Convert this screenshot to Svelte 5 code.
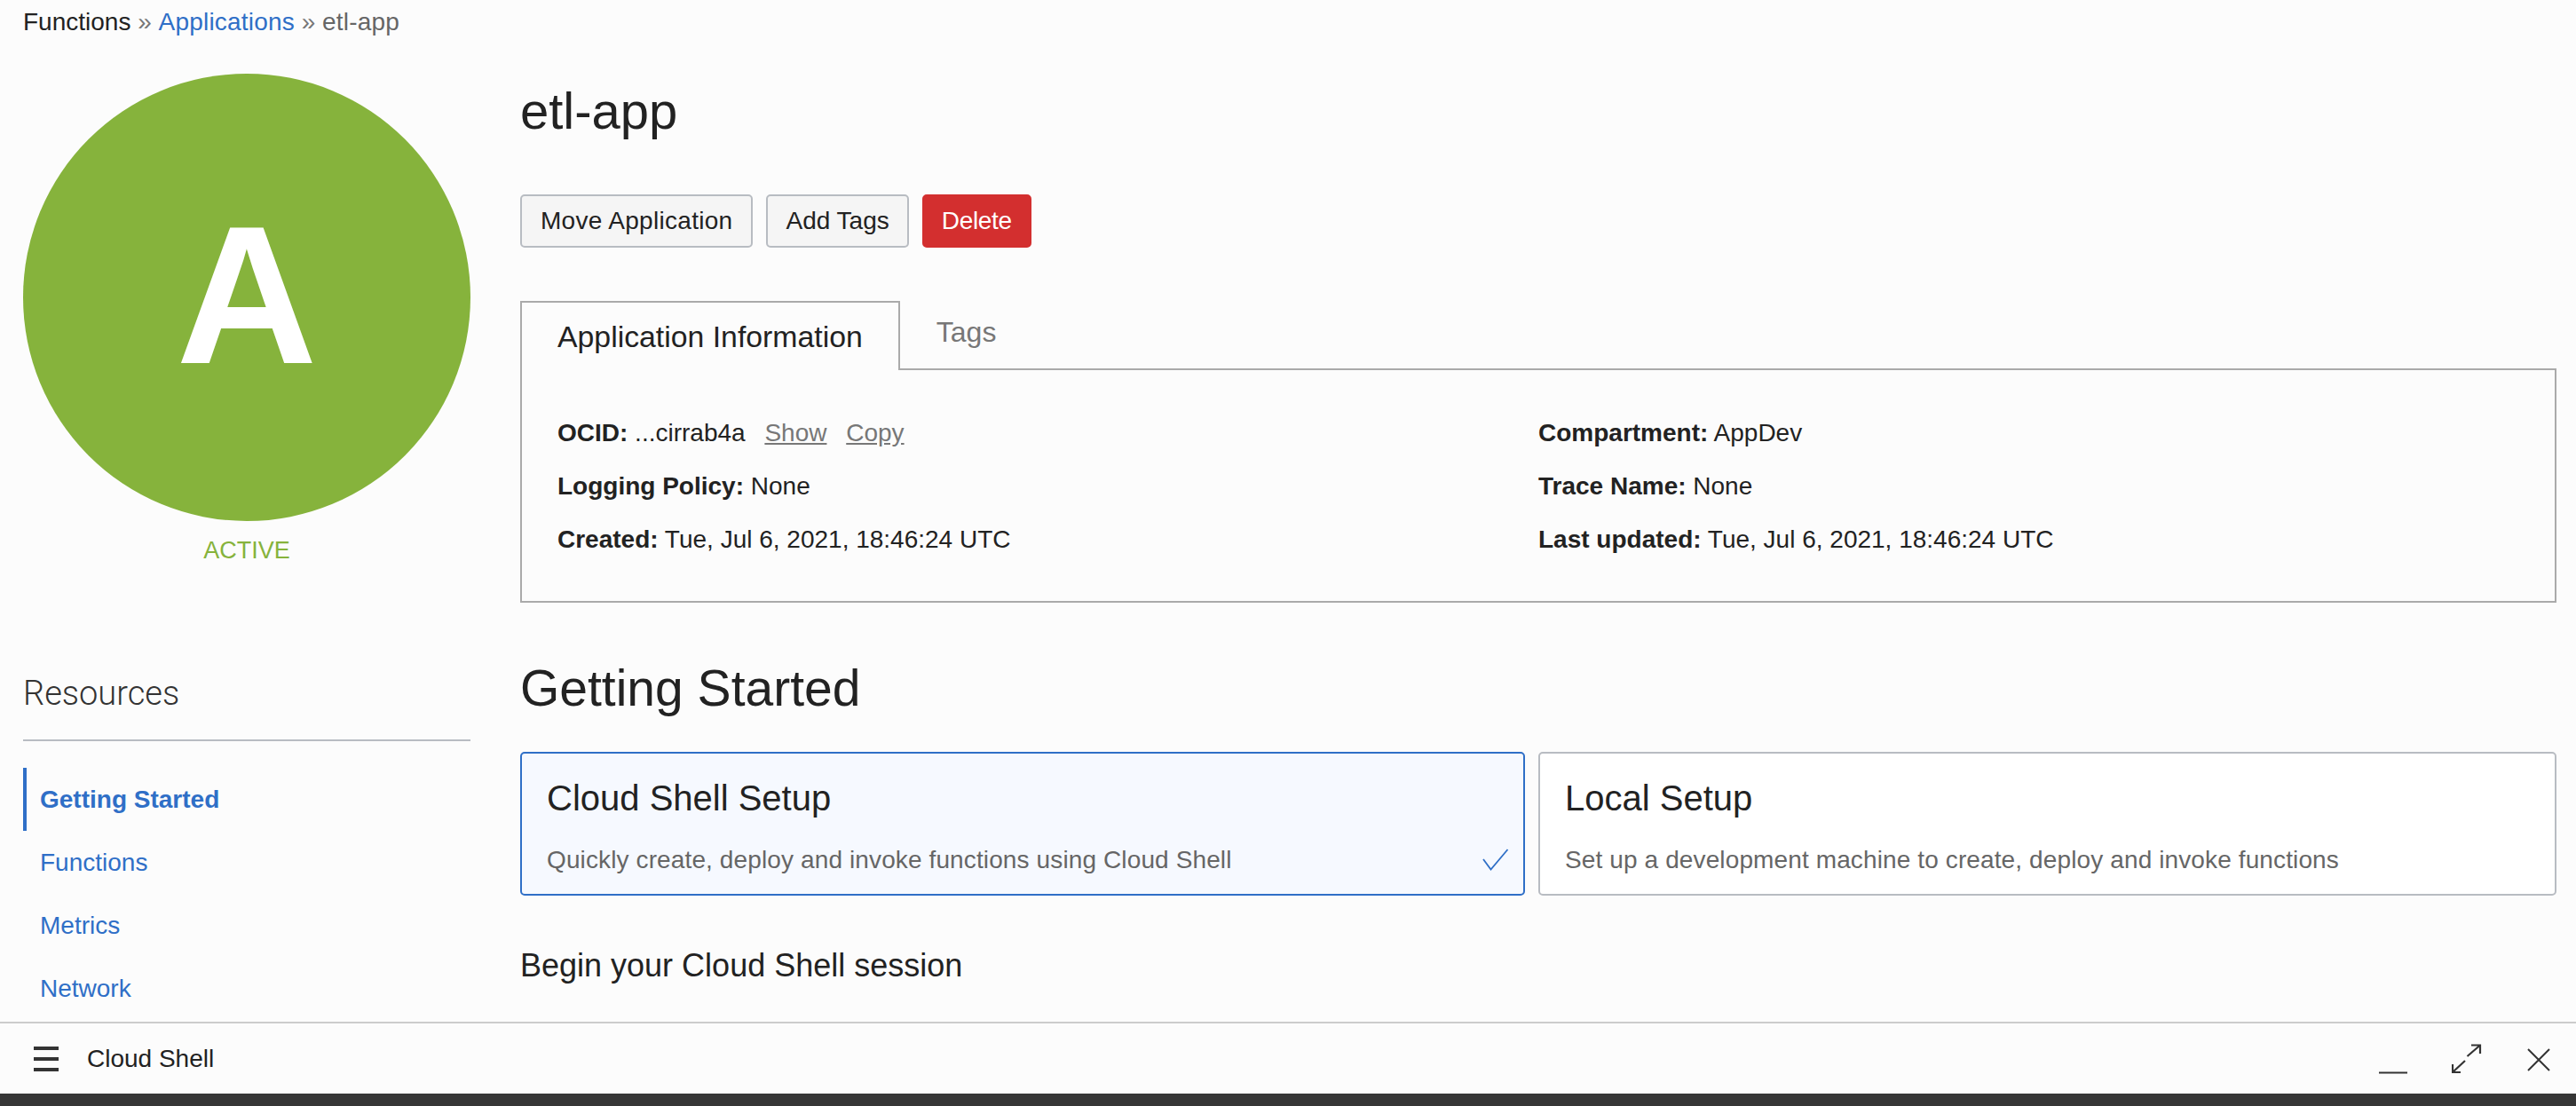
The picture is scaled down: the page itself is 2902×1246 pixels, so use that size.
<script>
  const navItems = ["Getting Started", "Functions", "Metrics", "Network"];
  const infoLeft = [
    ["Logging Policy:", "None"],
    ["Created:", "Tue, Jul 6, 2021, 18:46:24 UTC"]
  ];
  const infoRight = [
    ["Compartment:", "AppDev"],
    ["Trace Name:", "None"],
    ["Last updated:", "Tue, Jul 6, 2021, 18:46:24 UTC"]
  ];
</script>

<div class="page">
  <div class="content">
    <div class="breadcrumb">
      <span class="crumb-root">Functions</span>
      <span class="sep">»</span>
      <a class="crumb-link" href="#apps">Applications</a>
      <span class="sep">»</span>
      <span class="crumb-current">etl-app</span>
    </div>

    <div class="layout">
      <aside class="side">
        <div class="avatar">A</div>
        <div class="status">ACTIVE</div>
        <h3 class="res-title">Resources</h3>
        <nav class="res-nav">
          {#each navItems as item, i}
            <a class="res-item" class:active={i === 0} href="#res">{item}</a>
          {/each}
        </nav>
      </aside>

      <main class="main">
        <h1 class="title">etl-app</h1>
        <div class="actions">
          <button class="btn move">Move Application</button>
          <button class="btn">Add Tags</button>
          <button class="btn danger">Delete</button>
        </div>

        <div class="tabs">
          <div class="tab selected">Application Information</div>
          <div class="tab">Tags</div>
          <div class="tab-rest"></div>
        </div>
        <div class="panel">
          <div class="col">
            <div class="row">
              <b>OCID:</b> ...cirrab4a
              <a class="mini first" href="#show">Show</a>
              <a class="mini" href="#copy">Copy</a>
            </div>
            {#each infoLeft as [k, v]}
              <div class="row"><b>{k}</b> {v}</div>
            {/each}
          </div>
          <div class="col">
            {#each infoRight as [k, v]}
              <div class="row"><b>{k}</b> {v}</div>
            {/each}
          </div>
        </div>

        <h2 class="section">Getting Started</h2>
        <div class="cards">
          <div class="card on">
            <div class="card-title">Cloud Shell Setup</div>
            <div class="card-desc">Quickly create, deploy and invoke functions using Cloud Shell</div>
            <svg class="check" width="30" height="25" viewBox="0 0 30 25" fill="none" stroke="#2f6fc7" stroke-width="1.8">
              <path d="M1 12 L9.5 23.5 L28.5 1" />
            </svg>
          </div>
          <div class="card">
            <div class="card-title">Local Setup</div>
            <div class="card-desc">Set up a development machine to create, deploy and invoke functions</div>
          </div>
        </div>
        <div class="begin">Begin your Cloud Shell session</div>
      </main>
    </div>
  </div>

  <footer class="shell">
    <svg class="menu" width="28" height="28" viewBox="0 0 28 28" fill="#333">
      <rect x="0" y="0" width="28" height="4" />
      <rect x="0" y="12" width="28" height="4" />
      <rect x="0" y="24" width="28" height="4" />
    </svg>
    <span class="shell-label">Cloud Shell</span>
    <div class="shell-icons">
      <svg class="ic-min" width="32" height="3" viewBox="0 0 32 3" fill="#333"><rect width="32" height="2" y="0.5" /></svg>
      <svg class="ic-exp" width="34" height="34" viewBox="0 0 34 34" fill="none" stroke="#333" stroke-width="2.2">
        <path d="M17.5 14 L32 1.5 M22 1.5 H32 V11" />
        <path d="M15 19 L1 32 M1 23 V32 H10" />
      </svg>
      <svg class="ic-close" width="26" height="26" viewBox="0 0 26 26" fill="none" stroke="#333" stroke-width="2">
        <path d="M1 1 L25 25 M25 1 L1 25" />
      </svg>
    </div>
  </footer>
  <div class="strip"></div>
</div>

<style>
  :global(body) {
    margin: 0;
    background: #fcfcfc;
  }
  .page {
    display: flex;
    flex-direction: column;
    height: 1246px;
    overflow: hidden;
    font-family: "Liberation Sans", Arial, sans-serif;
    font-size: 28px;
    color: #222;
    background: #fcfcfc;
  }
  .content {
    flex: 1;
    min-height: 0;
    overflow: hidden;
  }
  .breadcrumb {
    height: 48px;
    line-height: 50px;
    padding-left: 26px;
    white-space: nowrap;
  }
  .sep {
    color: #777;
  }
  .crumb-link {
    color: #2f6fc7;
    text-decoration: none;
    letter-spacing: 0.2px;
  }
  .crumb-current {
    color: #666;
    letter-spacing: 0.2px;
  }
  .layout {
    display: flex;
    padding: 0 22px 0 26px;
    gap: 56px;
  }
  .side {
    width: 504px;
    flex: none;
    padding-top: 35px;
  }
  .avatar {
    width: 504px;
    height: 504px;
    border-radius: 50%;
    background: #86b33c;
    color: #fff;
    font-size: 220px;
    font-weight: 700;
    line-height: 500px;
    text-align: center;
  }
  .status {
    color: #86b33c;
    font-size: 27px;
    text-align: center;
    line-height: 32px;
    margin-top: 17px;
  }
  .res-title {
    margin: 121px 0 0;
    font-family: Roboto, "Liberation Sans", sans-serif;
    font-size: 38px;
    font-weight: 300;
    line-height: 48px;
    padding-bottom: 28px;
    border-bottom: 2px solid #b8bcc2;
    color: #333;
  }
  .res-nav {
    display: flex;
    flex-direction: column;
    margin-top: 30px;
  }
  .res-item {
    display: block;
    height: 71px;
    line-height: 71px;
    padding-left: 19px;
    color: #2f6fc7;
    text-decoration: none;
  }
  .res-item.active {
    font-weight: 700;
    border-left: 4px solid #2f6fc7;
    padding-left: 15px;
  }
  .main {
    flex: 1;
    min-width: 0;
  }
  .title {
    margin: 45px 0 0;
    font-size: 58px;
    font-weight: 400;
    line-height: 64px;
  }
  .actions {
    display: flex;
    gap: 15px;
    margin-top: 62px;
  }
  .btn {
    height: 60px;
    padding: 0 20px;
    font: inherit;
    color: #222;
    background: #f5f5f5;
    border: 2px solid #b8bcc2;
    border-radius: 5px;
  }
  .btn.move {
    padding: 0 21px;
    letter-spacing: 0.3px;
  }
  .btn.danger {
    letter-spacing: -0.3px;
    background: #d32f2f;
    border-color: #d32f2f;
    color: #fff;
  }
  .tabs {
    display: flex;
    margin-top: 60px;
    height: 78px;
    box-sizing: border-box;
  }
  .tab {
    padding: 0 41px;
    font-size: 32px;
    line-height: 70px;
    color: #777;
    border-bottom: 2px solid #aaa;
  }
  .tab.selected {
    padding: 0 40px;
    font-size: 33.8px;
    color: #222;
    border: 2px solid #aaa;
    border-bottom: 0;
    line-height: 76px;
  }
  .tab-rest {
    flex: 1;
    border-bottom: 2px solid #aaa;
  }
  .panel {
    display: grid;
    grid-template-columns: 1105px 1fr;
    border: 2px solid #aaa;
    border-top: 0;
    height: 262px;
    padding: 41px 0 0 40px;
    box-sizing: border-box;
  }
  .row {
    height: 60px;
    line-height: 60px;
    white-space: nowrap;
  }
  .mini {
    color: #777;
    margin-left: 14px;
    text-decoration: underline;
  }
  .section {
    margin: 60px 0 0;
    font-size: 57px;
    font-weight: 400;
    line-height: 72px;
  }
  .cards {
    display: grid;
    grid-template-columns: 1132px 1fr;
    gap: 15px;
    margin-top: 36px;
  }
  .card {
    position: relative;
    height: 162px;
    box-sizing: border-box;
    padding: 25px 28px 0;
    background: #fff;
    border: 2px solid #b8bcc2;
    border-radius: 5px;
  }
  .card.on {
    background: #f6f9ff;
    border-color: #2f6fc7;
  }
  .card-title {
    font-size: 40px;
    line-height: 50px;
  }
  .card-desc {
    margin-top: 25px;
    line-height: 40px;
    color: #666;
    letter-spacing: 0.12px;
  }
  .check {
    position: absolute;
    right: 16px;
    bottom: 26px;
  }
  .begin {
    margin-top: 56px;
    font-size: 36px;
    line-height: 46px;
  }
  .shell {
    flex: none;
    display: flex;
    align-items: center;
    height: 81px;
    box-sizing: border-box;
    border-top: 2px solid #ccc;
    padding: 0 29px 0 38px;
    background: #fcfcfc;
  }
  .shell-label {
    margin-left: 32px;
  }
  .shell-icons {
    display: flex;
    align-items: flex-end;
    margin-left: auto;
  }
  .ic-min {
    margin-right: 50px;
  }
  .ic-exp {
    margin-right: 51px;
  }
  .ic-close {
    margin-bottom: 3px;
  }
  .strip {
    flex: none;
    height: 14px;
    background: #363636;
  }
</style>
